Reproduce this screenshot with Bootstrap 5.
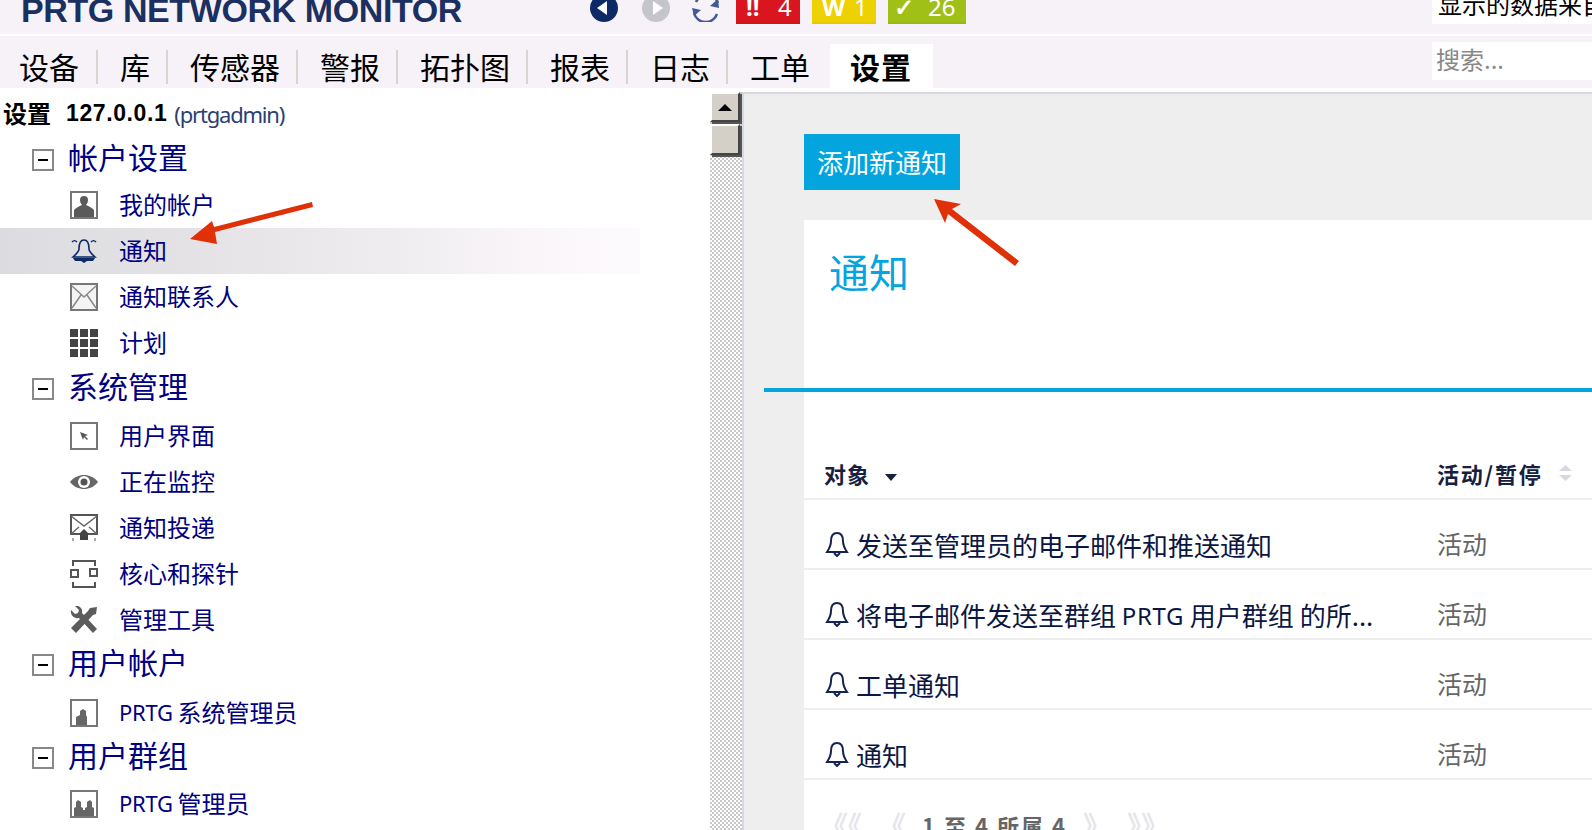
<!DOCTYPE html>
<html lang="zh">
<head>
<meta charset="utf-8">
<title>PRTG</title>
<link href="https://cdn.jsdelivr.net/npm/bootstrap@5.3.0/dist/css/bootstrap.min.css" rel="stylesheet">
<style>
html,body{height:830px;overflow:hidden;background:#fff}
body{font-family:"Noto Sans","Noto Sans CJK SC",sans-serif;font-weight:400;color:#000;position:relative}
svg{display:block;flex:none}
.hdr{height:34px;background:#f6f2f7;overflow:hidden}
.logo{width:569px;padding-left:21px;margin-right:21px;font:700 34px/1 "Liberation Sans",sans-serif;letter-spacing:-.4px;color:#1b2f60;margin-top:-7px;white-space:nowrap}
.tool{margin-right:24px}
.tool-n{margin-right:22px}
.tool-l{margin-right:16px}
.flag{height:24px;overflow:hidden;color:#fff;font:400 24px/14px "Noto Sans",sans-serif;margin-right:12px;box-shadow:inset 0 -2px 0 rgba(0,0,0,.04)}
.flag-r{background:#d9161f;width:64px}
.flag-y{background:#eed100;width:64px}
.flag-g{background:#a0c018;width:78px}
.flag span{display:block}
.flag .fl{padding-left:10px;width:34px;font-weight:700}
.flag-g .fl{padding-left:6px;width:40px}
.src{width:160px;height:24px;margin-left:auto;background:#fff;overflow:hidden;white-space:nowrap;font:400 24px/8px "Noto Sans CJK SC",sans-serif;padding-left:6px}
.gap2{height:2px;background:#fff}
.tabs{height:52px;background:#f6f2f7;position:relative}
.tab{height:34px;margin-top:14px;padding:0 16px 0 22px;border-right:2px solid #d8d4d2;font:400 30px/32px "Noto Sans CJK SC",sans-serif;color:#000;text-decoration:none}
.tab:first-child{padding:0 17px 0 19px}
.tab.plain{border-right:0;padding-right:20px}
.tab.on{height:44px;margin-top:8px;padding:0 21px 0 20px;background:#fff;border:0;font-weight:700;line-height:44px;letter-spacing:1px}
.find{width:160px;height:38px;margin:6px 0 0 auto;background:#fff;border:0;border-radius:0;padding:0 4px 5px;font:400 24px/33px "Noto Sans CJK SC",sans-serif}
.find::placeholder{color:#888;opacity:1}
.lower{height:742px}
.tree{width:710px;padding-top:3px;overflow:hidden}
.tree-head{height:46px;padding-left:3px;font-size:22px;white-space:nowrap}
.tree-head b{font:700 24px "Noto Sans CJK SC",sans-serif;margin:0 15px 4px 0}
.tree-head strong{font:700 23px "Liberation Sans",sans-serif;letter-spacing:.6px;margin:0 7px 1px 0}
.tree-head span{color:#2c3f72;font:400 22px "Noto Sans",sans-serif;letter-spacing:-1.2px;margin-bottom:1px}
.sect{padding-left:32px;color:#000080;font:400 30px/36px "Noto Sans CJK SC",sans-serif}
.sect-s{height:45px}
.sect-m{height:47px}
.up7{padding-bottom:7px}
.up10{padding-bottom:10px}
.up12{padding-bottom:12px}
.pm{width:22px;height:22px;border:2px solid #888;margin:8px 14px 0 0;position:relative;flex:none}
.pm::after{content:"";position:absolute;left:4px;right:4px;top:8px;height:2px;background:#000}
.leaf{height:46px;padding:0 0 3px 70px;color:#000080;font:400 24px/30px "Noto Sans CJK SC",sans-serif;text-decoration:none}
.leaf svg{margin:3px 21px 0 0}
.leaf small{font:400 22px "Noto Sans",sans-serif;letter-spacing:-.3px;margin-right:5px}
.leaf.sel{background:linear-gradient(90deg,#dcdce0 0,#e4e2e5 30%,#eeecee 60%,#f8f4f8 80%,#fefbfe 100%) no-repeat 0 0/640px 100%}
.bar{width:32px;margin-top:4px;background:conic-gradient(#c8c8c8 25%,#fff 0 50%,#c8c8c8 0 75%,#fff 0) 0 0/4px 4px}
.sb{width:30px;height:30px;background:#d4d0c8;border:2px solid;border-color:#fff #444 #444 #fff;box-shadow:2px 2px 0 #555}
.sb+.sb{margin-top:2px;height:31px}
.sb i{width:0;height:0;border:7px solid transparent;border-top:0;border-bottom:7px solid #000}
.work{flex:1 1 0;min-width:0;margin-top:4px;border-top:2px solid #d8d8e0;border-left:2px solid #d8d8e0;background:#eee;padding:40px 0 0 60px;overflow:hidden}
.work-btn{display:block;width:156px;height:56px;padding:0;background:#04a5de;color:#fff;border:0;border-radius:0;font:400 26px/54px "Noto Sans CJK SC",sans-serif;margin-bottom:30px}
.sheet{background:#fff;height:610px}
.sheet h1{margin:0;padding:32px 0 0 25px;height:168px;font:400 40px/38px "Noto Sans CJK SC",sans-serif;color:#04a5de}
.rule{height:4px;background:#04a5de;margin-left:-40px}
.grid{--bs-table-bg:transparent;margin:0;border-collapse:collapse;width:100%}
.grid th,.grid td{border-bottom:2px solid #eee;padding:0 0 4px 20px;vertical-align:bottom;white-space:nowrap}
.grid th{height:107px;font:700 22px/30px "Noto Sans CJK SC",sans-serif;color:#17203f;padding-bottom:10px;letter-spacing:1px}
.grid td{height:70px;font:400 26px/36px "Noto Sans CJK SC",sans-serif;color:#0b1743}
.grid td:first-child,.grid th:first-child{width:633px}
.grid td+td,.grid th+th{padding-left:0;color:#666;font-size:25px;padding-bottom:7px}
.grid th+th{color:#17203f;font-size:22px;padding-bottom:10px;letter-spacing:1.8px}
.grid small{font:400 24px "Noto Sans",sans-serif;letter-spacing:.6px}
.bl{margin:0 7px 2px 1px}
.caret-s{margin:8px 0 0 15px}
.pager{padding:32px 0 0 16px;font:700 22px/26px "Noto Sans CJK SC",sans-serif;letter-spacing:2px;color:#666;white-space:nowrap;gap:16px}
.pager u{text-decoration:none;color:#e6e6ea;font-size:28px;letter-spacing:0}
.marks{position:absolute;left:0;top:0;pointer-events:none}
</style>
</head>
<body>
<div class="hdr d-flex align-items-start">
  <div class="logo">PRTG NETWORK MONITOR</div>
  <svg class="tool" width="28" height="22" viewBox="0 6 28 22"><circle cx="14" cy="14" r="14" fill="#0e2a66"/><path d="M7 14l10-7v14z" fill="#fff"/></svg>
  <svg class="tool-n" width="28" height="22" viewBox="0 6 28 22"><circle cx="14" cy="14" r="14" fill="#c4c6cc"/><path d="M21 14l-10-7v14z" fill="#fff"/></svg>
  <svg class="tool-l" width="28" height="22" viewBox="0 6 28 22"><path d="M2 19a12 12 0 0 0 23 1M26 9A12 12 0 0 0 4 8" fill="none" stroke="#3f5b97" stroke-width="2.5"/><path d="M27 14l-9-2 8-7zM0 14l9 2-7 6z" fill="#3f5b97"/></svg>
  <div class="flag flag-r d-flex"><span class="fl">!!</span><span class="ms-2">4</span></div>
  <div class="flag flag-y d-flex"><span class="fl">W</span><span class="ms-2">1</span></div>
  <div class="flag flag-g d-flex"><span class="fl">✓</span><span>26</span></div>
  <div class="src">显示的数据来自</div>
</div>
<div class="gap2"></div>
<nav class="tabs d-flex align-items-start">
  <a class="tab" href="#">设备</a><a class="tab" href="#">库</a><a class="tab" href="#">传感器</a><a class="tab" href="#">警报</a><a class="tab" href="#">拓扑图</a><a class="tab" href="#">报表</a><a class="tab" href="#">日志</a><a class="tab plain" href="#">工单</a><a class="tab on" href="#">设置</a>
  <input class="form-control find" type="text" placeholder="搜索...">
</nav>
<div class="lower d-flex">
  <div class="tree">
    <div class="tree-head d-flex align-items-center"><b>设置</b><strong>127.0.0.1</strong><span>(prtgadmin)</span></div>
    <div class="sect sect-s up7 d-flex align-items-center"><i class="pm"></i>帐户设置</div>
    <a class="leaf d-flex align-items-center" href="#"><svg width="28" height="28" viewBox="0 0 28 28"><rect x="1" y="1" width="26" height="26" fill="#fff" stroke="#777" stroke-width="2"/><path d="M10 9a4 4 0 1 1 8 0c0 2-1 4-2 5 3 1 6 3 8 5v7H4v-7c2-2 5-4 8-5-1-1-2-3-2-5z" fill="#5a5a5a"/></svg>我的帐户</a>
    <a class="leaf sel d-flex align-items-center" href="#"><svg width="28" height="28" viewBox="0 0 28 28"><path d="M2 5c2-2 3-2 5 0M21 5c2-2 3-2 5 0M14 3c-4 0-5 4-5 9 0 3-4 6-6 8h22c-2-2-6-5-6-8 0-5-1-9-5-9z" fill="none" stroke="#0b2a66" stroke-width="1.6"/><path d="M3 21h22l-2 3h-6l-3 2-3-2H5z" fill="#0b2a66"/></svg>通知</a>
    <a class="leaf d-flex align-items-center" href="#"><svg width="28" height="28" viewBox="0 0 28 28"><rect x="1" y="1" width="26" height="26" fill="#f4f4f4" stroke="#777" stroke-width="2"/><path d="M2 3l12 11L26 3M2 25l9-13M26 25l-9-13" fill="none" stroke="#888" stroke-width="1.5"/></svg>通知联系人</a>
    <a class="leaf d-flex align-items-center" href="#"><svg width="28" height="28" viewBox="0 0 28 28"><path fill="#444" d="M0 0h8v8H0zM10 0h8v8h-8zM20 0h8v8h-8zM0 10h8v8H0zM10 10h8v8h-8zM20 10h8v8h-8zM0 20h8v8H0zM10 20h8v8h-8zM20 20h8v8h-8z"/></svg>计划</a>
    <div class="sect sect-m up10 d-flex align-items-center"><i class="pm"></i>系统管理</div>
    <a class="leaf d-flex align-items-center" href="#"><svg width="28" height="28" viewBox="0 0 28 28"><rect x="1" y="1" width="26" height="26" fill="#fff" stroke="#777" stroke-width="2"/><path d="M10 10l8 3-3 1 3 3-1 1-3-3-1 3z" fill="#555"/></svg>用户界面</a>
    <a class="leaf d-flex align-items-center" href="#"><svg width="28" height="28" viewBox="0 0 28 28"><path d="M0 14c4-5 9-7 14-7s10 2 14 7c-4 5-9 7-14 7S4 19 0 14z" fill="#666"/><circle cx="14" cy="14" r="6" fill="#fff"/><circle cx="14" cy="14" r="3.500" fill="#555"/></svg>正在监控</a>
    <a class="leaf d-flex align-items-center" href="#"><svg width="28" height="28" viewBox="0 0 28 28"><rect x="1" y="1" width="26" height="19" fill="#fff" stroke="#555" stroke-width="2"/><path d="M1 2l13 10L27 2M1 20l8-7M27 20l-8-7" fill="none" stroke="#666" stroke-width="1.5"/><path d="M10 26v-7l4-4 4 4v7z" fill="#444"/><path d="M2 24h2v3H2zM24 24h2v3h-2z" fill="#aaa"/></svg>通知投递</a>
    <a class="leaf d-flex align-items-center" href="#"><svg width="28" height="28" viewBox="0 0 28 28" fill="none" stroke="#555" stroke-width="2"><path d="M3 6V1h22v5M3 22v5h22v-5"/><rect x="1" y="10" width="7" height="7"/><rect x="20" y="9" width="7" height="7"/></svg>核心和探针</a>
    <a class="leaf d-flex align-items-center" href="#"><svg width="28" height="28" viewBox="0 0 28 28" fill="#5c5c5c"><path d="M1 4l4 4 3-1 1-3-4-4c4-1 8 2 7 7l15 16-4 4L9 12C4 13 0 9 1 4z"/><path d="M20 2l7-1-1 7-3 1L6 27l-5-5L18 5z"/></svg>管理工具</a>
    <div class="sect sect-m up12 d-flex align-items-center"><i class="pm"></i>用户帐户</div>
    <a class="leaf d-flex align-items-center" href="#"><svg width="28" height="28" viewBox="0 0 28 28"><rect x="1" y="1" width="26" height="26" fill="#fff" stroke="#777" stroke-width="2"/><path d="M6 26v-8l4-2v-4l3-2 3 2v4l1 2v8z" fill="#666"/></svg><small>PRTG</small>系统管理员</a>
    <div class="sect sect-s up10 d-flex align-items-center"><i class="pm"></i>用户群组</div>
    <a class="leaf d-flex align-items-center" href="#"><svg width="28" height="28" viewBox="0 0 28 28"><rect x="1" y="1" width="26" height="26" fill="#fff" stroke="#777" stroke-width="2"/><path d="M4 26v-8l2-1v-5l2-2 3 2v5l2 1v2h2v-2l2-1v-5l3-2 2 2v5l2 1v8z" fill="#666"/></svg><small>PRTG</small>管理员</a>
  </div>
  <div class="bar">
    <div class="sb d-flex align-items-center justify-content-center"><i></i></div>
    <div class="sb"></div>
  </div>
  <main class="work">
    <button class="btn work-btn" type="button">添加新通知</button>
    <section class="sheet">
      <h1>通知</h1>
      <div class="rule"></div>
      <table class="table grid">
        <thead><tr>
          <th><span class="d-inline-flex align-items-center">对象<svg class="caret-s" width="12" height="7" viewBox="0 0 12 7"><path d="M0 0h12L6 7z" fill="#17203f"/></svg></span></th>
          <th><span class="d-inline-flex align-items-center">活动/暂停<svg class="ms-3" width="13" height="16" viewBox="0 0 13 16"><path d="M0 6L6.500 0 13 6zM0 10h13l-6.500 6z" fill="#d8d8e0"/></svg></span></th>
        </tr></thead>
        <tbody>
          <tr><td><span class="d-inline-flex align-items-center"><svg class="bl" width="24" height="26" viewBox="0 0 24 26"><path d="M12 2c-4 0-6 3-6 8 0 4-2 8-4 11h20c-2-3-4-7-4-11 0-5-2-8-6-8zM9 22l3 3 3-3" fill="none" stroke="#16224f" stroke-width="2"/></svg>发送至管理员的电子邮件和推送通知</span></td><td>活动</td></tr>
          <tr><td><span class="d-inline-flex align-items-center"><svg class="bl" width="24" height="26" viewBox="0 0 24 26"><path d="M12 2c-4 0-6 3-6 8 0 4-2 8-4 11h20c-2-3-4-7-4-11 0-5-2-8-6-8zM9 22l3 3 3-3" fill="none" stroke="#16224f" stroke-width="2"/></svg>将电子邮件发送至群组&nbsp;<small>PRTG</small>&nbsp;用户群组&nbsp;的所...</span></td><td>活动</td></tr>
          <tr><td><span class="d-inline-flex align-items-center"><svg class="bl" width="24" height="26" viewBox="0 0 24 26"><path d="M12 2c-4 0-6 3-6 8 0 4-2 8-4 11h20c-2-3-4-7-4-11 0-5-2-8-6-8zM9 22l3 3 3-3" fill="none" stroke="#16224f" stroke-width="2"/></svg>工单通知</span></td><td>活动</td></tr>
          <tr><td><span class="d-inline-flex align-items-center"><svg class="bl" width="24" height="26" viewBox="0 0 24 26"><path d="M12 2c-4 0-6 3-6 8 0 4-2 8-4 11h20c-2-3-4-7-4-11 0-5-2-8-6-8zM9 22l3 3 3-3" fill="none" stroke="#16224f" stroke-width="2"/></svg>通知</span></td><td>活动</td></tr>
        </tbody>
      </table>
      <div class="pager d-flex align-items-center"><u>《《</u><u>《</u><span>1 至 4 所属 4</span><u>》</u><u>》》</u></div>
    </section>
  </main>
</div>
<svg class="marks" width="1592" height="830" viewBox="0 0 1592 830">
  <path fill="#e03008" d="M190 239l22-18 2 6 98-25 1 5-98 25 2 12zM934 199l27 5-9 5 67 52-4 5-67-52-3 9z"/>
</svg>
<script src="https://cdn.jsdelivr.net/npm/bootstrap@5.3.0/dist/js/bootstrap.bundle.min.js"></script>
</body>
</html>
